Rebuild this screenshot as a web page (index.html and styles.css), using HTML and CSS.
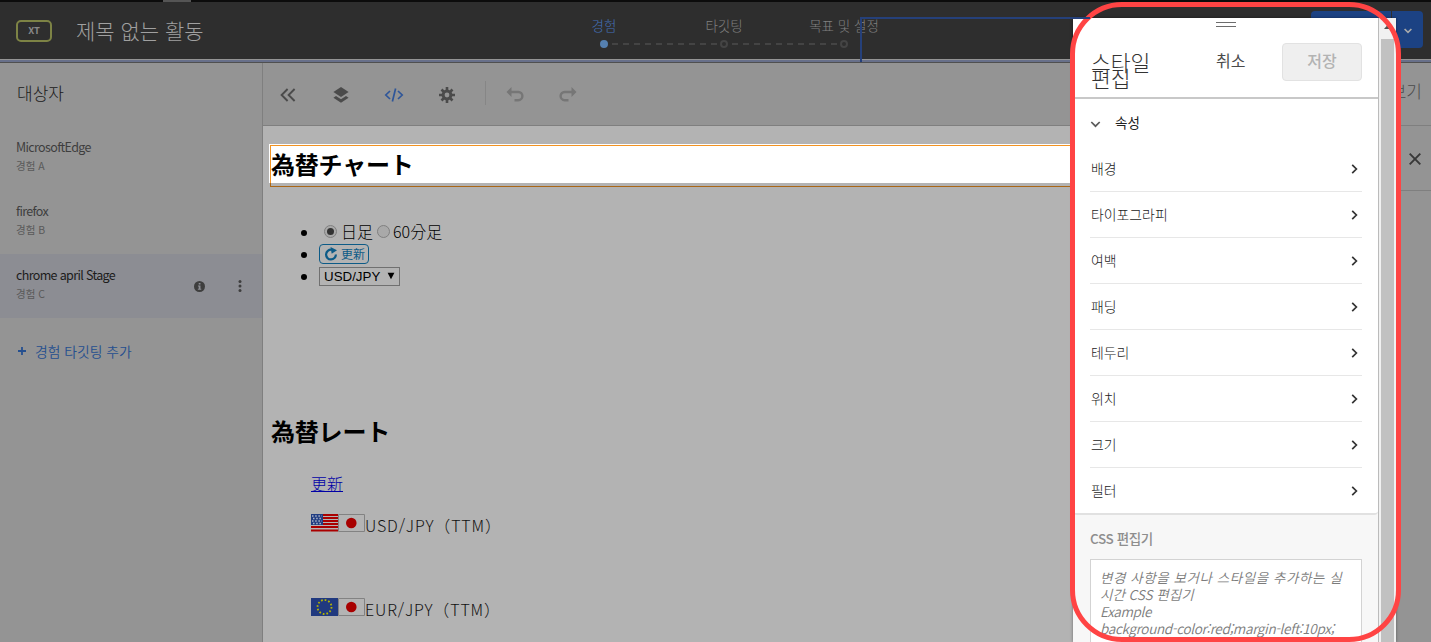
FILE: index.html
```html
<!DOCTYPE html>
<html lang="ko">
<head>
<meta charset="utf-8">
<title>제목 없는 활동</title>
<link rel="stylesheet" href="styles.css">
</head>
<body>
<div class="app">
  <header class="header">
    <div class="badge">XT</div>
    <div class="title">제목 없는 활동</div>
    <nav class="steps">
      <div class="step active"><span class="step-label">경험</span><i class="dot"></i></div>
      <svg class="dash" width="105" height="2"><path d="M0 1H105" stroke="#444" stroke-width="2" stroke-dasharray="6 5"/></svg>
      <div class="step"><span class="step-label">타깃팅</span><i class="dot"></i></div>
      <svg class="dash" width="105" height="2"><path d="M0 1H105" stroke="#444" stroke-width="2" stroke-dasharray="6 5"/></svg>
      <div class="step last"><span class="step-label">목표 및 설정</span><i class="dot"></i></div>
    </nav>
    <div class="actions">
      <div class="action-main"></div>
      <div class="action-more"><svg width="8" height="6" viewBox="0 0 8 6"><path d="M.6 1 4 4.400 7.400 1" fill="none" stroke="#aaa" stroke-width="1.600"/></svg></div>
    </div>
    <div class="tab-mark"></div>
    <div class="outline"></div>
  </header>
  <div class="body">
    <aside class="sidebar">
      <h2 class="aud-title">대상자</h2>
      <div class="exp"><div><div class="exp-name">MicrosoftEdge</div><div class="exp-sub">경험 A</div></div></div>
      <div class="exp"><div><div class="exp-name">firefox</div><div class="exp-sub">경험 B</div></div></div>
      <div class="exp selected">
        <div><div class="exp-name">chrome april Stage</div><div class="exp-sub">경험 C</div></div>
        <svg class="info" width="11" height="11" viewBox="0 0 10 10"><circle cx="5" cy="5" r="5" fill="#3e3e3e"/><path d="M4.3 1.8h1.6v1.4H4.3zM3.6 4.1h2.3v3h.7v.9H3.5v-.9h.8V5h-.7z" fill="#8c8d93"/></svg>
        <svg class="more" width="4" height="12" viewBox="0 0 4 12"><g fill="#3e3e3e"><circle cx="2" cy="1.6" r="1.5"/><circle cx="2" cy="6" r="1.5"/><circle cx="2" cy="10.4" r="1.5"/></g></svg>
      </div>
      <div class="add"><svg width="8" height="8" viewBox="0 0 8 8"><path d="M4 0V8M0 4H8" stroke="#254f8f" stroke-width="1.8"/></svg><span>경험 타깃팅 추가</span></div>
    </aside>
    <main class="main">
      <div class="toolbar">
        <svg width="16" height="14" viewBox="0 0 16 14"><path d="M7.6 1 1.6 7l6 6M14.6 1l-6 6 6 6" fill="none" stroke="#4b4b4b" stroke-width="1.9"/></svg>
        <svg width="16" height="16" viewBox="0 0 16 16"><path d="M8 0l7.6 5L8 10 .4 5z" fill="#4b4b4b"/><path d="M.4 10.7 3 9l5 3.2L13 9l2.6 1.700L8 15.800z" fill="#4b4b4b"/></svg>
        <svg width="20" height="14" viewBox="0 0 20 14"><path d="M6 3 1.800 7 6 11M14 3l4.200 4L14 11M11.600.5 8.400 13.500" fill="none" stroke="#2f5699" stroke-width="1.700"/></svg>
        <svg width="16" height="16" viewBox="0 0 16 16"><g stroke="#4b4b4b" stroke-width="2.600"><path d="M8 0V16M0 8H16M2.500 2.500l11 11M13.500 2.500l-11 11"/></g><circle cx="8" cy="8" r="5.400" fill="#4b4b4b"/><circle cx="8" cy="8" r="2.400" fill="#949494"/></svg>
        <div class="sep"></div>
        <svg width="18" height="15" viewBox="0 0 18 15"><path d="M5.500 0v10L.5 5z" fill="#767676"/><path d="M5 5h7.300a3.700 3.700 0 0 1 0 8.200H8.500" fill="none" stroke="#767676" stroke-width="2.400"/></svg>
        <svg width="18" height="15" viewBox="0 0 18 15"><path d="M12.500 0v10l5-5z" fill="#767676"/><path d="M13 5H5.700a3.700 3.700 0 0 0 0 8.200H9.500" fill="none" stroke="#767676" stroke-width="2.400"/></svg>
      </div>
      <div class="canvas">
        <div class="selection"><h1 class="jp-h">為替チャート</h1></div>
        <ul class="opts">
          <li><i class="radio on"></i><span>日足</span><i class="radio second"></i><span>60分足</span></li>
          <li><div class="refresh"><svg width="14" height="14" viewBox="0 0 14 14"><path d="M7.500 2.700A4.900 4.900 0 1 0 11.900 7.500" fill="none" stroke="#0d5b87" stroke-width="2.200"/><path d="M6.500 0l6.500 3.200-5.300 3.600z" fill="#0d5b87"/></svg><span>更新</span></div></li>
          <li><div class="select"><span>USD/JPY</span><svg width="8" height="8" viewBox="0 0 8 8"><path d="M.6.8H7.400L4 7.200z"/></svg></div></li>
        </ul>
        <h1 class="jp-h rate">為替レート</h1>
        <a class="link">更新</a>
        <div class="pair">
          <svg width="27" height="18" viewBox="0 0 27 18"><path fill="#b4b4b4" d="M0 0h27v18H0z"/><path d="M0 1h27M0 4h27M0 7h27M0 10h27M0 13h27M0 16.500h27" stroke="#a00" stroke-width="2"/><path fill="#213d82" d="M0 0h12v11H0z"/><path d="M1 2h10M2 4.500h9M1 7h10M2 9.500h9" stroke="#aab2c6" stroke-width="1.300" stroke-dasharray="1.500 1.700"/></svg><svg width="27" height="18" viewBox="0 0 27 18"><path fill="#b4b4b4" stroke="#828282" d="M.5.5h26v17H.5z"/><circle cx="13.300" cy="9" r="5.300" fill="#a80000"/></svg><span>USD/JPY（TTM）</span>
        </div>
        <div class="pair eur">
          <svg width="27" height="18" viewBox="0 0 27 18"><path fill="#20397f" d="M0 0h27v18H0z"/><circle cx="13.500" cy="9" r="7" fill="none" stroke="#b5b500" stroke-width="1.800" stroke-dasharray="1.700 1.965"/></svg><svg width="27" height="18" viewBox="0 0 27 18"><path fill="#b4b4b4" stroke="#828282" d="M.5.5h26v17H.5z"/><circle cx="13.300" cy="9" r="5.300" fill="#a80000"/></svg><span>EUR/JPY（TTM）</span>
        </div>
      </div>
    </main>
    <aside class="rail">
      <div class="rail-top">보기</div>
      <div class="rail-close"><svg width="12" height="12" viewBox="0 0 12 12"><path d="M.7.7l10.600 10.600M11.300.7.7 11.300" stroke="#383838" stroke-width="1.900"/></svg></div>
    </aside>
  </div>
</div>
<section class="dialog">
  <div class="panel">
    <div class="panel-head">
      <i class="grip"></i>
      <div class="panel-title">스타일<br>편집</div>
      <div class="cancel">취소</div>
      <div class="save">저장</div>
    </div>
    <div class="props">
      <div class="props-head"><svg width="11" height="7" viewBox="0 0 11 7"><path d="M1.300 1 5.500 5.200 9.700 1" fill="none" stroke="#5a5a5a" stroke-width="1.700"/></svg><span>속성</span></div>
      <div class="row"><span>배경</span><svg class="chev" viewBox="0 0 7 10"><path d="M1.200.8 5.400 5 1.200 9.200"/></svg></div>
      <div class="row"><span>타이포그라피</span><svg class="chev" viewBox="0 0 7 10"><path d="M1.200.8 5.400 5 1.200 9.200"/></svg></div>
      <div class="row"><span>여백</span><svg class="chev" viewBox="0 0 7 10"><path d="M1.200.8 5.400 5 1.200 9.200"/></svg></div>
      <div class="row"><span>패딩</span><svg class="chev" viewBox="0 0 7 10"><path d="M1.200.8 5.400 5 1.200 9.200"/></svg></div>
      <div class="row"><span>테두리</span><svg class="chev" viewBox="0 0 7 10"><path d="M1.200.8 5.400 5 1.200 9.200"/></svg></div>
      <div class="row"><span>위치</span><svg class="chev" viewBox="0 0 7 10"><path d="M1.200.8 5.400 5 1.200 9.200"/></svg></div>
      <div class="row"><span>크기</span><svg class="chev" viewBox="0 0 7 10"><path d="M1.200.8 5.400 5 1.200 9.200"/></svg></div>
      <div class="row end"><span>필터</span><svg class="chev" viewBox="0 0 7 10"><path d="M1.200.8 5.400 5 1.200 9.200"/></svg></div>
    </div>
    <div class="css-editor">
      <div class="css-title">CSS 편집기</div>
      <div class="css-box"><p class="ko1">변경 사항을 보거나 스타일을 추가하는 실</p><p class="ko2">시간 CSS 편집기</p><p class="en1">Example</p><p class="en2">background-color:red;margin-left:10px;</p></div>
    </div>
  </div>
  <div class="scroll"><svg width="7" height="4" viewBox="0 0 7 4"><path d="M3.500 0 7 4H0z" fill="#505050"/></svg><div class="thumb"></div></div>
</section>
<div class="callout"></div>
</body>
</html>
```
FILE: styles.css
```css
* { box-sizing: border-box; }
body { margin: 0; width: 1431px; height: 642px; overflow: hidden; position: relative; font-family: "Noto Sans CJK KR", sans-serif; font-weight: 300; white-space: nowrap; }
h1, h2, p, ul { margin: 0; padding: 0; }
svg { display: block; flex: none; }
.app { height: 642px; display: flex; flex-direction: column; }

.header { position: relative; height: 63px; flex: none; display: flex; background: #2e2e2e; border-top: 2px solid #0c0c0c; border-bottom: 1px solid #505050; }
.header::after { content: ""; position: absolute; left: 0; right: 0; bottom: 0; height: 2px; background: #68708a; border-top: 1px solid #949494; }
.badge { width: 36px; height: 22px; margin: 18px 0 0 16px; border: 2px solid #7d8345; border-radius: 5px; color: #888; font-size: 9.500px; line-height: 17px; font-weight: 700; text-align: center; }
.title { width: 468px; margin-left: 24px; color: #a0a0a0; font-size: 21px; line-height: 56px; }
.steps { display: flex; margin-top: 13px; padding-left: 52.500px; }
.step { width: 15px; display: flex; flex-direction: column; align-items: center; color: #808080; font-size: 13.500px; }
.step-label { line-height: 20px; height: 25px; }
.active { color: #4470b8; }
.dot { width: 8px; height: 8px; border-radius: 50%; border: 2px solid #444; }
.active .dot { background: #5580b0; border-color: #5580b0; }
.dash { margin: 28px 0 0; }
.actions { display: flex; margin: 9px 0 0 459.500px; height: 37px; }
.action-main { width: 80px; background: #1c4283; border-radius: 4px 0 0 4px; }
.action-more { width: 31px; margin-left: 1px; background: #1c4283; border-radius: 0 4px 4px 0; display: flex; align-items: center; justify-content: center; padding-top: 3px; }
.tab-mark { position: absolute; left: 163px; top: -2px; width: 28px; height: 2px; background: #555; }
.outline { position: absolute; left: 860px; top: 15px; width: 230px; height: 45px; border: solid #25407a; border-width: 2px 0 0 2px; z-index: 1; }

.body { flex: 1; display: flex; min-height: 0; }
.sidebar { width: 263px; flex: none; background: #949494; border-right: 1px solid #7f7f7f; }
.aud-title { font-size: 17px; font-weight: 300; color: #1a1a1a; line-height: 24px; padding: 18px 0 10px 17px; height: 63px; }
.exp { height: 64px; padding: 11px 0 0 16px; display: flex; color: #3e3e3e; position: relative; }
.exp-name { font-size: 12.500px; line-height: 19px; font-weight: 400; letter-spacing: -.65px; }
.exp-sub { font-size: 10.500px; line-height: 19px; color: #5a5a5a; font-weight: 400; }
.exp > div { width: 178px; }
.selected { background: #8c8d93; }
.selected .exp-name { color: #1c1c1c; }
.info { margin-top: 15.500px; }
.more { margin: 15px 0 0 33px; }
.add { display: flex; align-items: center; gap: 9px; padding: 23px 0 0 18px; color: #254f8f; font-size: 13.800px; line-height: 20px; font-weight: 350; }

.main { flex: 1; min-width: 0; display: flex; flex-direction: column; }
.toolbar { height: 63px; flex: none; display: flex; align-items: center; background: #949494; border-bottom: 1px solid #7f7f7f; padding: 1px 0 0 17px; }
.toolbar svg:nth-child(2) { margin-left: 37px; }
.toolbar svg:nth-child(3) { margin-left: 35px; }
.toolbar svg:nth-child(4) { margin-left: 35px; }
.sep { width: 1px; height: 24px; background: #868686; margin: 0 20px 3px 30px; }
.toolbar svg:nth-child(7) { margin-left: 35px; }
.canvas { flex: 1; min-height: 0; overflow: hidden; background: #b3b3b3; color: #000; font-family: "Noto Sans CJK JP", sans-serif; padding-top: 18px; }
.selection { margin-left: 6px; height: 42px; position: relative; background: linear-gradient(#fff 39px, transparent 39px); }
.selection::before { content: ""; position: absolute; left: 1px; right: 0; top: 1px; height: 38px; border: solid #f39322; border-width: 1px 0 0 1px; }
.selection::after { content: ""; position: absolute; left: 1px; right: 0; top: 39px; height: 3px; border: solid #aa6717; border-width: 0 0 1px 1px; }
.jp-h { font-size: 24px; line-height: 36px; font-weight: 700; padding: 2px 0 0 2px; letter-spacing: -.2px; }
.opts { list-style: none; padding: 35px 0 0 56px; font-size: 16px; }
.opts li { height: 22px; display: flex; align-items: center; position: relative; line-height: 22px; }
.opts li::before { content: ""; position: absolute; left: -18px; top: 9px; width: 6px; height: 6px; border-radius: 50%; background: #000; }
.opts li > span { position: relative; top: -1px; }
.radio { width: 13px; height: 13px; border-radius: 50%; border: 1px solid #808080; background: #a9a9a9; margin: 0 4px 2px 5px; display: flex; align-items: center; justify-content: center; }
.radio.on::after { content: ""; width: 7px; height: 7px; border-radius: 50%; background: #333; }
.radio.second { margin: 0 3px 2px 4px; }
.refresh { width: 50px; height: 20px; border: 1px solid #0d5b87; border-radius: 4px; color: #0d5b87; display: flex; align-items: center; gap: 3px; padding-left: 4px; font-size: 12px; font-weight: 400; }
.select { width: 81px; height: 19px; border: 1px solid #707070; display: flex; align-items: center; gap: 7px; padding-left: 4px; font: 13.330px "Liberation Sans", sans-serif; }
.rate { margin: 124px 0 0 6px; }
.link { display: block; width: 32px; margin: 22px 0 0 48px; font-size: 16px; line-height: 24px; color: #0000a6; text-decoration: underline; }
.pair { display: flex; margin: 19px 0 0 48px; height: 24px; font-size: 16px; color: #111; }
.pair span { line-height: 22px; letter-spacing: .85px; }
.eur { margin-top: 60px; }

.rail { width: 60px; flex: none; background: #949494; color: #4b4b4b; }
.rail-top { height: 63px; border-bottom: 1px solid #7f7f7f; font-size: 17px; line-height: 56px; text-align: right; padding-right: 9px; }
.rail-close { height: 65px; border-bottom: 1px solid #7f7f7f; padding: 27px 0 0 38px; }

.dialog { position: absolute; left: 1073px; top: 18px; width: 323px; height: 624px; display: flex; background: #f7f7f7; box-shadow: 0 0 3px rgba(0,0,0,.4); overflow: hidden; }
.panel { width: 305px; display: flex; flex-direction: column; }
.panel-head { height: 81px; flex: none; background: #fff; border-bottom: 2px solid #c8c8c8; display: flex; position: relative; padding-left: 18px; }
.grip { position: absolute; left: 143px; top: 4px; width: 20px; height: 5px; border: solid #6c6c6c; border-width: 1.500px 0; }
.panel-title { width: 125px; margin-top: 36px; font-size: 21.500px; line-height: 16px; color: #333; }
.cancel { width: 66px; font-size: 16px; line-height: 24px; margin-top: 30px; color: #4b4b4b; font-weight: 400; }
.save { width: 80px; height: 38px; margin-top: 25px; background: #efefef; border: 1px solid #e2e2e2; border-radius: 4px; text-align: center; font-size: 16px; line-height: 33px; color: #b3b3b3; font-weight: 500; }
.props { background: #fff; padding: 0 16px 0 17px; border-bottom: 2px solid #e1e1e1; border-radius: 0 0 4px 4px; }
.props-head { height: 47px; display: flex; align-items: center; gap: 14px; font-size: 13.500px; color: #222; font-weight: 400; }
.props-head svg { margin-top: 3px; }
.props-head span { padding-bottom: 2px; }
.row { height: 46px; border-bottom: 1px solid #e7e7e7; display: flex; align-items: center; justify-content: space-between; padding: 0 4px 0 1px; font-size: 13.900px; color: #222; }
.row span { padding-bottom: 2px; }
.end { border: 0; height: 45px; }
.chev { width: 7px; height: 10px; fill: none; stroke: #333; stroke-width: 1.700; }
.css-editor { padding: 13px 16px 0 17px; flex: 1; min-height: 0; overflow: hidden; }
.css-title { font-size: 13.500px; line-height: 20px; font-weight: 500; color: #8e8e8e; height: 31px; letter-spacing: -.4px; }
.css-box { width: 272px; height: 100px; background: #fff; border: 1px solid #d3d3d3; padding: 9px 0 0 9px; font-size: 13.500px; line-height: 17px; font-style: italic; font-weight: 350; color: #7c7c7c; }
.ko1 { letter-spacing: .55px; }
.en1, .en2 { letter-spacing: -.3px; }
.scroll { width: 18px; border-left: 1px solid #bbb; background: #f1f1f1; padding: 7px 0 0 5px; display: flex; flex-direction: column; }
.thumb { flex: 1; width: 13px; margin: 10px 0 0 -3px; background: #c1c1c1; }
.callout { position: absolute; left: 1070px; top: 2px; width: 331px; height: 640px; border: 5px solid #ff4444; border-radius: 52px; }
```
